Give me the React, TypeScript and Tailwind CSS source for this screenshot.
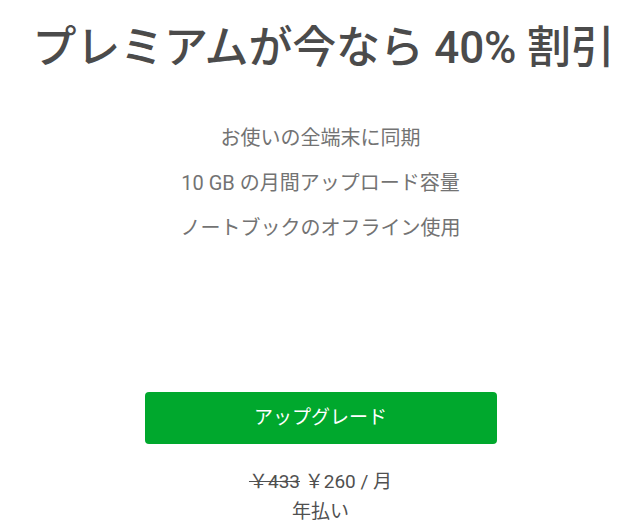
export default function App() {
  const features = ['お使いの全端末に同期', '10 GB の月間アップロード容量', 'ノートブックのオフライン使用'];

  return (
    <div
      className="w-[641px] h-[532px] bg-white flex flex-col items-center overflow-hidden"
      style={{ fontFamily: 'Roboto, "Noto Sans CJK JP", sans-serif' }}
    >
      <h1 className="mt-[20px] pl-[6px] h-[56px] leading-[56px] text-[44px] font-medium text-[#4b4b4b] whitespace-nowrap tracking-[-0.2px]">
        プレミアムが今なら 40% 割引
      </h1>

      <ul className="mt-[48px] flex flex-col items-center gap-[16px] text-[20px] leading-[29px] text-[#737373]">
        {features.map((f) => (
          <li key={f}>{f}</li>
        ))}
      </ul>

      <button className="mt-[149px] w-[352px] h-[52px] rounded-[4px] bg-[#00a82d] text-white text-[19px]">
        アップグレード
      </button>

      <div className="mt-[23px] flex flex-col items-center text-[19px] leading-[30px] text-[#505050]">
        <p>
          <span className="line-through">￥433</span> ￥260 / 月
        </p>
        <p>年払い</p>
      </div>
    </div>
  );
}
